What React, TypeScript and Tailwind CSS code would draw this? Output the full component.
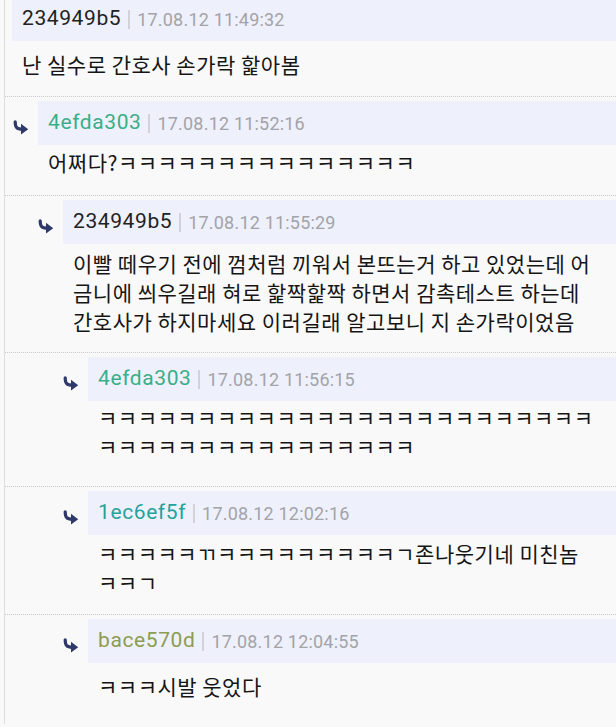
import React from "react";

type Comment = {
  id: string;
  depth: 0 | 1 | 2 | 3;
  name: string;
  nameColor: string;
  time: string;
  lines: string[];
  bodyClass: string;
};

const comments: Comment[] = [
  {
    id: "c1",
    depth: 0,
    name: "234949b5",
    nameColor: "text-[#222222]",
    time: "17.08.12 11:49:32",
    lines: ["난 실수로 간호사 손가락 핥아봄"],
    bodyClass: "mt-[9px] pb-[17px]",
  },
  {
    id: "c2",
    depth: 1,
    name: "4efda303",
    nameColor: "text-[#3aae88]",
    time: "17.08.12 11:52:16",
    lines: ["어쩌다?ㅋㅋㅋㅋㅋㅋㅋㅋㅋㅋㅋㅋㅋㅋㅋ"],
    bodyClass: "mt-[3px] pb-[18px]",
  },
  {
    id: "c3",
    depth: 2,
    name: "234949b5",
    nameColor: "text-[#222222]",
    time: "17.08.12 11:55:29",
    lines: [
      "이빨 떼우기 전에 껌처럼 끼워서 본뜨는거 하고 있었는데 어",
      "금니에 씌우길래 혀로 핥짝핥짝 하면서 감촉테스트 하는데",
      "간호사가 하지마세요 이러길래 알고보니 지 손가락이었음",
    ],
    bodyClass: "mt-[5px] pb-[16px]",
  },
  {
    id: "c4",
    depth: 3,
    name: "4efda303",
    nameColor: "text-[#3aae88]",
    time: "17.08.12 11:56:15",
    lines: ["ㅋㅋㅋㅋㅋㅋㅋㅋㅋㅋㅋㅋㅋㅋㅋㅋㅋㅋㅋㅋㅋㅋㅋㅋㅋ", "ㅋㅋㅋㅋㅋㅋㅋㅋㅋㅋㅋㅋㅋㅋㅋㅋ"],
    bodyClass: "mt-[2px] pb-[25px]",
  },
  {
    id: "c5",
    depth: 3,
    name: "1ec6ef5f",
    nameColor: "text-[#26a29c]",
    time: "17.08.12 12:02:16",
    lines: ["ㅋㅋㅋㅋㅋㄲㅋㅋㅋㅋㅋㅋㅋㅋㅋㄱ존나웃기네 미친놈", "ㅋㅋㄱ"],
    bodyClass: "mt-[4px] pb-[17px]",
  },
  {
    id: "c6",
    depth: 3,
    name: "bace570d",
    nameColor: "text-[#8c9c52]",
    time: "17.08.12 12:04:55",
    lines: ["ㅋㅋㅋ시발 웃었다"],
    bodyClass: "mt-[9px] pb-[18px]",
  },
];

const indent = {
  0: "pl-[7px]",
  1: "pl-[7px]",
  2: "pl-[32px]",
  3: "pl-[57px]",
};

function ReplyArrow() {
  return (
    <svg width="17" height="15" viewBox="0 0 17 15" className="block">
      <path d="M3.2 1.8 C3.2 7.6 4.8 9.2 10.4 9.2" fill="none" stroke="#2f3a6a" strokeWidth="3.2" strokeLinecap="round" />
      <polygon points="9,3.8 16.2,9.2 9,14.4" fill="#2f3a6a" strokeLinejoin="round" />
    </svg>
  );
}

function CommentItem({ c, first }: { c: Comment; first: boolean }) {
  return (
    <div className={first ? "-mt-[3px]" : "border-t border-dotted border-[#c9c9d2] pt-[4px]"}>
      <div className={`flex ${indent[c.depth]}`}>
        {c.depth > 0 && (
          <div className="w-[26px] shrink-0 pt-[19px]">
            <ReplyArrow />
          </div>
        )}
        <div className="min-w-0 flex-1">
          <div className="flex h-[44px] items-center bg-[#eef1fb] pl-[10px]">
            <span className={`font-['Roboto',sans-serif] text-[21px] tracking-[0.6px] ${c.nameColor}`}>{c.name}</span>
            <span className="mx-[7px] h-[19px] w-[2px] bg-[#d2d2d8]" />
            <span className="font-['Roboto',sans-serif] text-[18px] tracking-[0.2px] text-[#a3a3a8]">{c.time}</span>
          </div>
          <div
            className={`${c.bodyClass} pl-[10px] font-['Noto_Sans_CJK_KR','Noto_Sans',sans-serif] text-[21px] leading-[29px] tracking-[0.5px] text-[#151515]`}
          >
            {c.lines.map((line, i) => (
              <div key={i} className="whitespace-nowrap">
                {line}
              </div>
            ))}
          </div>
        </div>
      </div>
    </div>
  );
}

export default function App() {
  return (
    <div className="h-[727px] w-[616px] overflow-hidden bg-[#f9f9f9] pl-[4px]">
      <div className="h-full border-l border-[#dcdcdc]">
        {comments.map((c, i) => (
          <CommentItem key={c.id} c={c} first={i === 0} />
        ))}
      </div>
    </div>
  );
}
